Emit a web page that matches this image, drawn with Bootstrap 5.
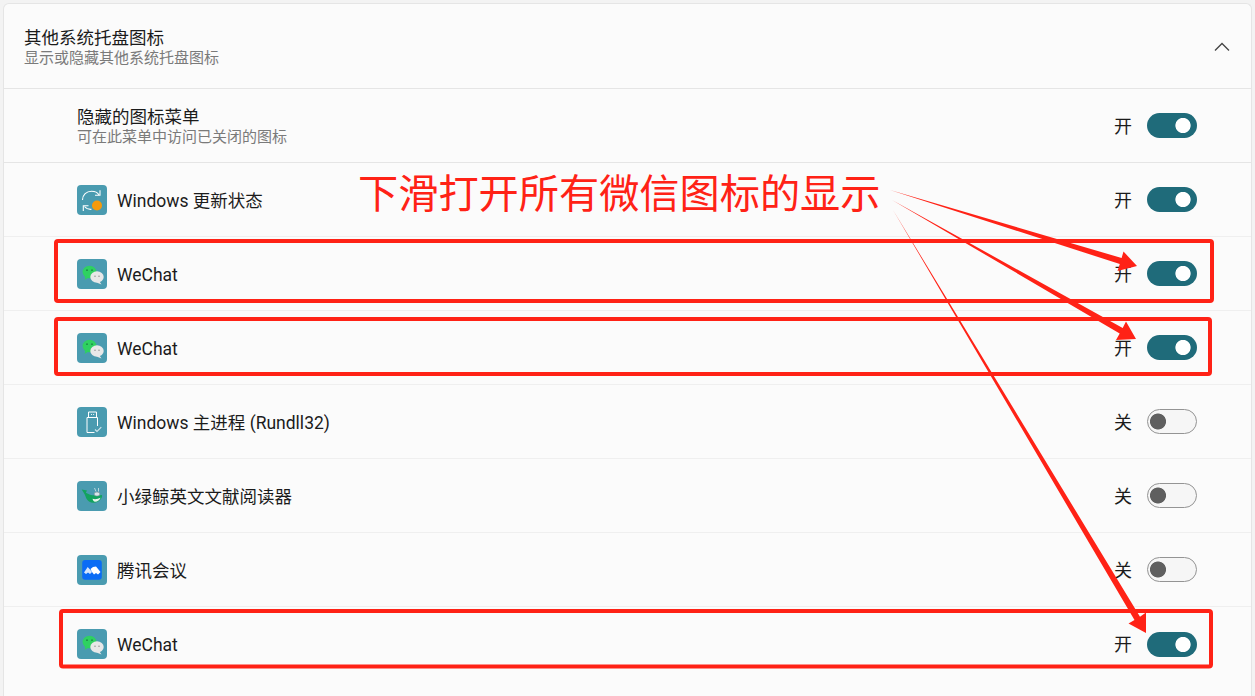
<!DOCTYPE html>
<html lang="zh-CN">
<head>
<meta charset="utf-8">
<title>其他系统托盘图标</title>
<link href="https://cdn.jsdelivr.net/npm/bootstrap@5.3.0/dist/css/bootstrap.min.css" rel="stylesheet">
<style>
html,body{height:696px;overflow:hidden}
body{background:#f3f3f3;font-family:Roboto,"Noto Sans CJK SC",sans-serif;color:#1b1b1b;position:relative}
.tray-wrap{padding:3px 3px 0 3px}
.tray-card{background:#fbfbfb;border:1px solid #e5e5e5;border-bottom:0;border-radius:6px 6px 0 0;height:693px;--bs-card-bg:#fbfbfb}
.tray-head{height:85px;padding:2px 21px 0 20px;border-bottom:1px solid #e5e5e5}
.tray-title{font-size:17.5px;line-height:22px}
.tray-sub{font-size:15px;line-height:18px;color:#7a7a7a}
.card>.list-group.tray-list{border-top:0;border-bottom:0;--bs-list-group-bg:transparent;--bs-list-group-border-color:#efefef}
.tray-row{height:74px;padding:0 54px 0 73px;font-size:17.5px;background:transparent;color:#1b1b1b}
.tray-row:first-child{border-bottom-color:#e5e5e5}
.tray-name{padding-top:3px}
.tray-icon{width:30px;height:30px;flex:none;margin-right:10px;display:block}
.tray-state{width:18px;line-height:1;margin-right:15px;font-size:18px;position:relative;top:1px}
.form-check-input.tray-toggle,.form-check-input.tray-toggle:checked,.form-check-input.tray-toggle:focus{
  width:50px;height:25px;margin:0;flex:none;border-radius:13px;box-shadow:none;opacity:1;
  background-size:auto;background-position:0 0;background-repeat:no-repeat}
.form-check-input.tray-toggle:checked{background-color:#1f6b7a;border:0;
  background-image:radial-gradient(circle at 36px 12.5px,#fff 7.2px,#1f6b7a 8px)}
.form-check-input.tray-toggle:not(:checked){background-color:#f6f6f6;border:1px solid #949494;
  background-image:radial-gradient(circle at 10px 11.5px,#5f5f5f 7.6px,#f6f6f6 8.4px)}
.note-layer{position:absolute;left:0;top:0;width:1255px;height:696px;pointer-events:none}
.note-text{position:absolute;left:358px;top:162px;font-family:"Noto Sans CJK SC",sans-serif;font-size:40.2px;line-height:58px;color:#ff2216;white-space:nowrap}
</style>
</head>
<body>
<svg width="0" height="0" class="d-block position-absolute">
  <defs>
    <symbol id="ic-wechat" viewBox="0 0 30 30">
      <rect width="30" height="30" rx="4" fill="#4a9bb0"/>
      <ellipse cx="12.500" cy="13" rx="6.900" ry="6.300" fill="#2fd161"/>
      <path d="M8.500 17.500 7.500 21l4-2.500z" fill="#2fd161"/>
      <circle cx="10" cy="11.200" r=".9" fill="#1c8a45"/><circle cx="15" cy="11.200" r=".9" fill="#1c8a45"/>
      <ellipse cx="20" cy="18" rx="6.700" ry="5.800" fill="#e8e8e8"/>
      <path d="M22.500 22.500 24.500 25.500 19.500 23.500z" fill="#e8e8e8"/>
      <circle cx="18" cy="17.200" r=".8" fill="#9a9a9a"/><circle cx="22" cy="17.200" r=".8" fill="#9a9a9a"/>
    </symbol>
  </defs>
</svg>
<div class="tray-wrap">
  <div class="card tray-card overflow-hidden">
    <div class="tray-head d-flex align-items-center justify-content-between">
      <div>
        <div class="tray-title">其他系统托盘图标</div>
        <div class="tray-sub">显示或隐藏其他系统托盘图标</div>
      </div>
      <svg width="16" height="10" viewBox="0 0 16 10" fill="none" stroke="#444" stroke-width="1.300"><path d="M1 8.500 8 1.500l7 7"/></svg>
    </div>
    <div class="list-group list-group-flush tray-list">
      <div class="list-group-item tray-row d-flex align-items-center">
        <div class="flex-grow-1"><div class="tray-title">隐藏的图标菜单</div><div class="tray-sub">可在此菜单中访问已关闭的图标</div></div>
        <span class="tray-state">开</span><input class="form-check-input tray-toggle" type="checkbox" role="switch" checked aria-label="隐藏的图标菜单">
      </div>
      <div class="list-group-item tray-row d-flex align-items-center">
        <svg class="tray-icon" viewBox="0 0 30 30"><rect width="30" height="30" rx="4" fill="#4a9bb0"/><g fill="none" stroke="#fff" stroke-width="1.100"><path d="M5.500 15C5.500 9.800 9.500 6.300 14.500 6.300c3.200 0 6 1 7.500 3.700"/><path d="M23 5.300V10.300H18"/><path d="M7.500 21.500c1.500 2 4 3 7 2.800"/><path d="M6.300 26V20.800H11.500"/></g><circle cx="20" cy="20.500" r="5" fill="#f59a0c"/></svg>
        <span class="flex-grow-1 tray-name">Windows 更新状态</span>
        <span class="tray-state">开</span><input class="form-check-input tray-toggle" type="checkbox" role="switch" checked aria-label="Windows 更新状态">
      </div>
      <div class="list-group-item tray-row d-flex align-items-center">
        <svg class="tray-icon"><use href="#ic-wechat"/></svg>
        <span class="flex-grow-1 tray-name">WeChat</span>
        <span class="tray-state">开</span><input class="form-check-input tray-toggle" type="checkbox" role="switch" checked aria-label="WeChat">
      </div>
      <div class="list-group-item tray-row d-flex align-items-center">
        <svg class="tray-icon"><use href="#ic-wechat"/></svg>
        <span class="flex-grow-1 tray-name">WeChat</span>
        <span class="tray-state">开</span><input class="form-check-input tray-toggle" type="checkbox" role="switch" checked aria-label="WeChat">
      </div>
      <div class="list-group-item tray-row d-flex align-items-center">
        <svg class="tray-icon" viewBox="0 0 30 30"><rect width="30" height="30" rx="4" fill="#4a9bb0"/><g fill="none" stroke="#fff" stroke-width="1"><path d="M11.500 10.500V5h8v5.500"/><path d="M10 10.500h10.500v8.500M10 10.500V25.500h7.500"/><path d="M14 7.500h.9M16.200 7.500h.9"/></g><path d="M18 22.500l2 2 4.300-4.300" fill="none" stroke="#cfe6ec" stroke-width="1.100"/></svg>
        <span class="flex-grow-1 tray-name">Windows 主进程 (Rundll32)</span>
        <span class="tray-state">关</span><input class="form-check-input tray-toggle" type="checkbox" role="switch" aria-label="Windows 主进程">
      </div>
      <div class="list-group-item tray-row d-flex align-items-center">
        <svg class="tray-icon" viewBox="0 0 30 30"><rect width="30" height="30" rx="4" fill="#4a9bb0"/><path d="M4.700 8.500 10 9.500 8.800 11.800l3.700 1.700c3 1 8 1.200 12.500.5.500 1.500-.5 3.500-2 5-1.500 1.800-4 2.700-6.500 2.700-3.500 0-6-1.800-7.300-4.500-.6-1.400-1-2.800-1.700-4.200z" fill="#13a35e"/><path d="M15.500 17.800c2.500.8 5.500.3 8-1-.6 2-2.800 4-5.500 4-1 0-2-1.300-2.500-3z" fill="#eaf5ef"/><ellipse cx="20" cy="13" rx="2.800" ry="2" fill="#d9e6ea" stroke="#7d8f95" stroke-width=".6"/><path d="M17.500 7l1.500 3.500M21.500 7v3.500" stroke="#d5e5e8" stroke-width=".8"/></svg>
        <span class="flex-grow-1 tray-name">小绿鲸英文文献阅读器</span>
        <span class="tray-state">关</span><input class="form-check-input tray-toggle" type="checkbox" role="switch" aria-label="小绿鲸英文文献阅读器">
      </div>
      <div class="list-group-item tray-row d-flex align-items-center">
        <svg class="tray-icon" viewBox="0 0 30 30"><rect width="30" height="30" rx="4" fill="#4a9bb0"/><rect x="5.200" y="5" width="19.600" height="19.800" rx="3" fill="#0a6cf5"/><path d="M7 17.500 10.700 12 13 14.500 15 17 13 19 11 17.500 9 19z" fill="#d6e6fb"/><path d="M13.500 14 16 12 19 11.500 23.500 17 21 19.500 19 18 17 19.500 15 17z" fill="#fff"/></svg>
        <span class="flex-grow-1 tray-name">腾讯会议</span>
        <span class="tray-state">关</span><input class="form-check-input tray-toggle" type="checkbox" role="switch" aria-label="腾讯会议">
      </div>
      <div class="list-group-item tray-row d-flex align-items-center">
        <svg class="tray-icon"><use href="#ic-wechat"/></svg>
        <span class="flex-grow-1 tray-name">WeChat</span>
        <span class="tray-state">开</span><input class="form-check-input tray-toggle" type="checkbox" role="switch" checked aria-label="WeChat">
      </div>
    </div>
  </div>
</div>
<div class="note-layer">
  <svg width="1255" height="696" viewBox="0 0 1255 696" class="d-block">
    <g fill="none" stroke="#ff2216" stroke-width="4">
      <rect x="56" y="241" width="1156" height="60" rx="2"/>
      <rect x="56" y="319" width="1154" height="55" rx="2"/>
      <rect x="61" y="611" width="1150" height="55.500" rx="2"/>
    </g>
    <g fill="#ff2216">
      <polygon points="890,190 1119.800,264 1117.500,271 1137,266 1123.500,251.500 1121.600,258"/>
      <polygon points="892,200 1119.700,333.400 1116,340 1136,339 1126,321.500 1122.700,328"/>
      <polygon points="893,210 1134.500,620 1128.500,623.500 1146,633 1146,612.500 1140,616.700"/>
    </g>
  </svg>
  <div class="note-text">下滑打开所有微信图标的显示</div>
</div>
</body>
</html>
